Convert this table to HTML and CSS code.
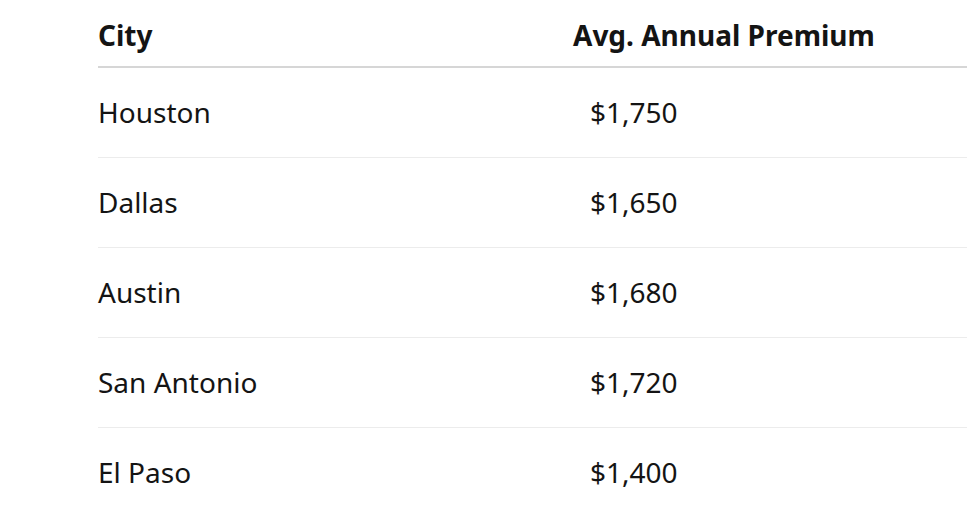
FILE: index.html
```html
<!DOCTYPE html>
<html>
<head>
<meta charset="utf-8">
<link rel="stylesheet" href="styles.css">
</head>
<body>
<div class="wrap">
<table class="premiums">
<thead>
<tr><th class="city">City</th><th class="prem">Avg. Annual Premium</th></tr>
</thead>
<tbody>
<tr><td class="city">Houston</td><td class="val">$1,750</td></tr>
<tr><td class="city">Dallas</td><td class="val">$1,650</td></tr>
<tr><td class="city">Austin</td><td class="val">$1,680</td></tr>
<tr><td class="city">San Antonio</td><td class="val">$1,720</td></tr>
<tr><td class="city">El Paso</td><td class="val">$1,400</td></tr>
</tbody>
</table>
</div>
</body>
</html>
```
FILE: styles.css
```css
html, body {
  margin: 0;
  padding: 0;
  background: #fff;
  overflow: hidden;
}
.wrap {
  padding-left: 98px;
}
.premiums {
  width: 100%;
  border-collapse: collapse;
  font-family: "Noto Sans", "Open Sans", sans-serif;
  font-size: 28px;
  color: #141414;
}
.premiums th {
  text-align: left;
  font-weight: 700;
  line-height: 36px;
  padding: 17px 0 13px 0;
  border-bottom: 2px solid #d6d6d6;
}
.premiums td {
  line-height: 36px;
  padding: 26px 0 27px 0;
  border-bottom: 1px solid #ececec;
}
.premiums tbody tr:last-child td {
  border-bottom: none;
}
.premiums .city {
  width: 475px;
}
.premiums .val {
  padding-left: 17px;
}
```
